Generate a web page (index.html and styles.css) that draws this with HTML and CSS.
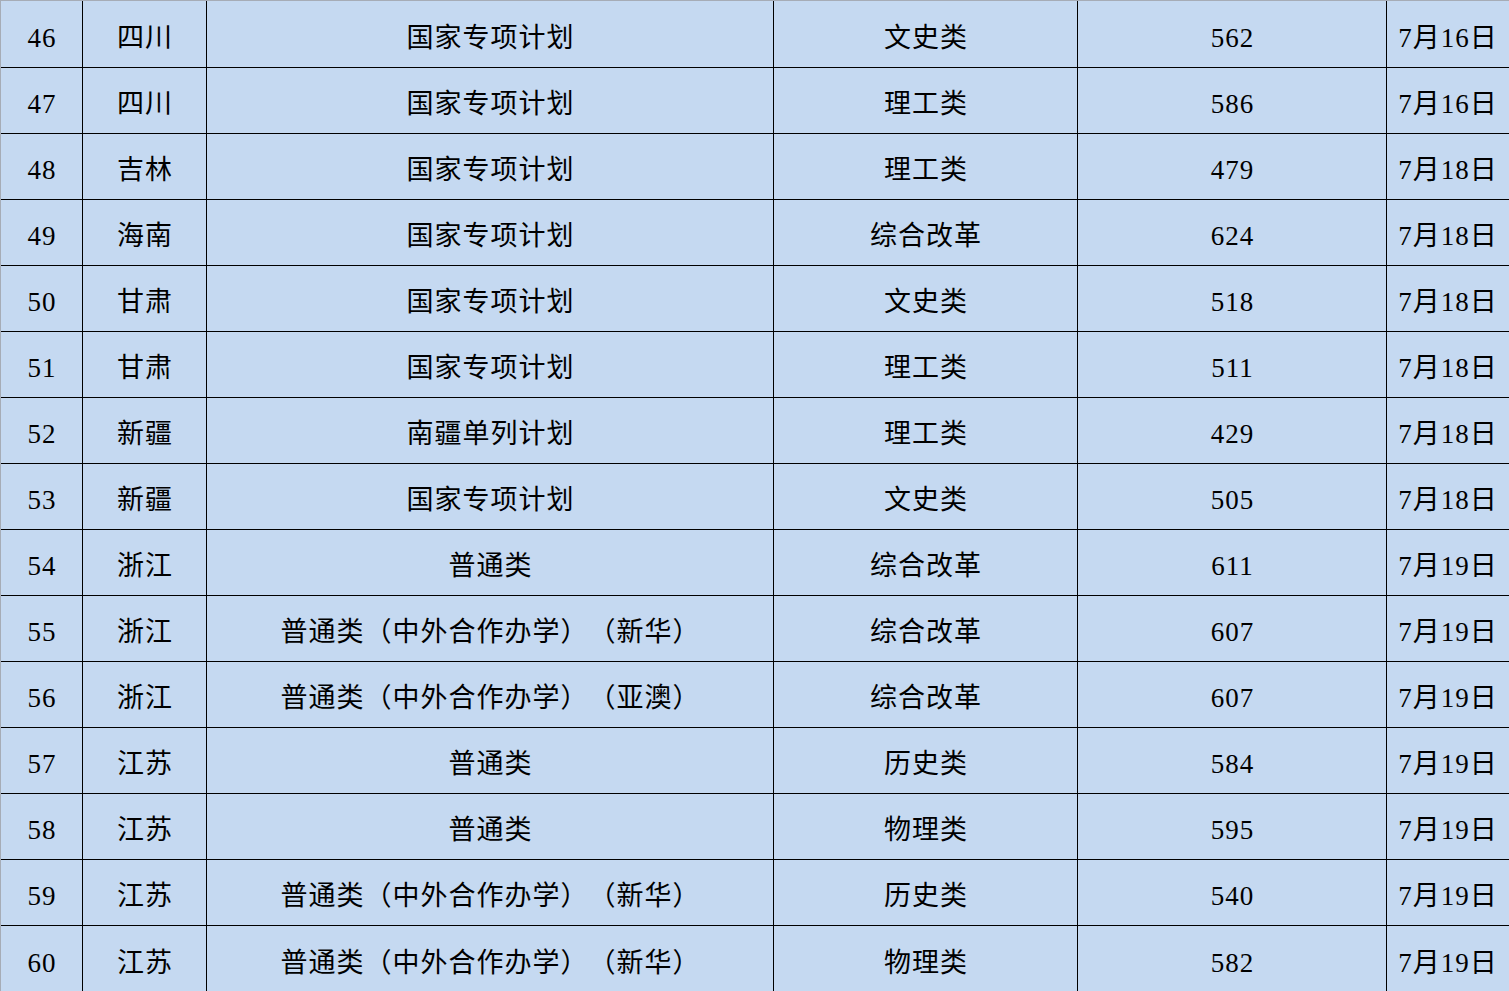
FILE: index.html
```html
<!DOCTYPE html>
<html lang="zh-CN">
<head>
<meta charset="utf-8">
<title>录取分数</title>
<link rel="stylesheet" href="styles.css">
</head>
<body>
<div class="sheet">
  <div class="row"><div class="c">46</div><div class="c">四川</div><div class="c">国家专项计划</div><div class="c">文史类</div><div class="c">562</div><div class="c">7月16日</div></div>
  <div class="row"><div class="c">47</div><div class="c">四川</div><div class="c">国家专项计划</div><div class="c">理工类</div><div class="c">586</div><div class="c">7月16日</div></div>
  <div class="row"><div class="c">48</div><div class="c">吉林</div><div class="c">国家专项计划</div><div class="c">理工类</div><div class="c">479</div><div class="c">7月18日</div></div>
  <div class="row"><div class="c">49</div><div class="c">海南</div><div class="c">国家专项计划</div><div class="c">综合改革</div><div class="c">624</div><div class="c">7月18日</div></div>
  <div class="row"><div class="c">50</div><div class="c">甘肃</div><div class="c">国家专项计划</div><div class="c">文史类</div><div class="c">518</div><div class="c">7月18日</div></div>
  <div class="row"><div class="c">51</div><div class="c">甘肃</div><div class="c">国家专项计划</div><div class="c">理工类</div><div class="c">511</div><div class="c">7月18日</div></div>
  <div class="row"><div class="c">52</div><div class="c">新疆</div><div class="c">南疆单列计划</div><div class="c">理工类</div><div class="c">429</div><div class="c">7月18日</div></div>
  <div class="row"><div class="c">53</div><div class="c">新疆</div><div class="c">国家专项计划</div><div class="c">文史类</div><div class="c">505</div><div class="c">7月18日</div></div>
  <div class="row"><div class="c">54</div><div class="c">浙江</div><div class="c">普通类</div><div class="c">综合改革</div><div class="c">611</div><div class="c">7月19日</div></div>
  <div class="row"><div class="c">55</div><div class="c">浙江</div><div class="c">普通类（中外合作办学）（新华）</div><div class="c">综合改革</div><div class="c">607</div><div class="c">7月19日</div></div>
  <div class="row"><div class="c">56</div><div class="c">浙江</div><div class="c">普通类（中外合作办学）（亚澳）</div><div class="c">综合改革</div><div class="c">607</div><div class="c">7月19日</div></div>
  <div class="row"><div class="c">57</div><div class="c">江苏</div><div class="c">普通类</div><div class="c">历史类</div><div class="c">584</div><div class="c">7月19日</div></div>
  <div class="row"><div class="c">58</div><div class="c">江苏</div><div class="c">普通类</div><div class="c">物理类</div><div class="c">595</div><div class="c">7月19日</div></div>
  <div class="row"><div class="c">59</div><div class="c">江苏</div><div class="c">普通类（中外合作办学）（新华）</div><div class="c">历史类</div><div class="c">540</div><div class="c">7月19日</div></div>
  <div class="row"><div class="c">60</div><div class="c">江苏</div><div class="c">普通类（中外合作办学）（新华）</div><div class="c">物理类</div><div class="c">582</div><div class="c">7月19日</div></div>
</div>
</body>
</html>
```

FILE: styles.css
```css
html, body {
  margin: 0;
  padding: 0;
  background: #c5d9f1;
}

.sheet {
  width: 1509px;
  box-sizing: border-box;
  border-top: 1px solid #a6acb6;
  border-left: 1px solid #a6acb6;
  background: #c5d9f1;
  font-family: "Liberation Serif", "Noto Sans CJK SC", serif;
  font-size: 27px;
  color: #000;
  text-spacing-trim: space-all;
  letter-spacing: 1px;
}

.row {
  display: grid;
  grid-template-columns: 82px 124px 567px 304px 309px 121px;
  height: 66px;
  box-sizing: border-box;
  border-bottom: 1px solid #000;
}

.row:first-child {
  height: 67px;
}

.row:last-child {
  border-bottom: none;
}

.c {
  display: flex;
  align-items: center;
  justify-content: center;
  box-sizing: border-box;
  border-right: 1px solid #000;
  padding-top: 8px;
  padding-left: 1px;
  white-space: nowrap;
  line-height: 1;
}

.c:last-child {
  border-right: none;
}
```
